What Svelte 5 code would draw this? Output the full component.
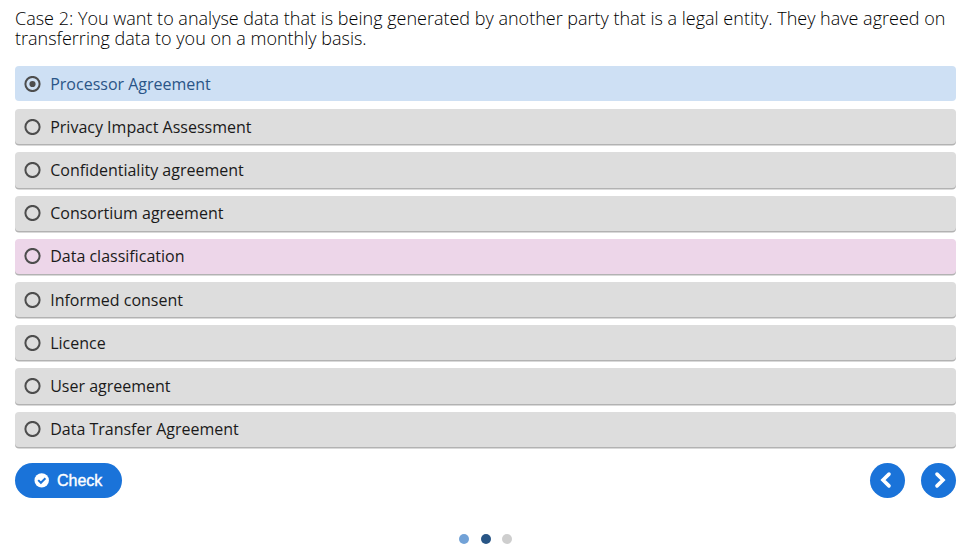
<script>
  const answers = [
    'Processor Agreement',
    'Privacy Impact Assessment',
    'Confidentiality agreement',
    'Consortium agreement',
    'Data classification',
    'Informed consent',
    'Licence',
    'User agreement',
    'Data Transfer Agreement'
  ];
  let selected = $state(0);
</script>

<main>
  <p class="question">
    Case 2: You want to analyse data that is being generated by another party that is a legal entity. They have agreed on transferring data to you on a monthly basis.
  </p>
  <div class="answers" role="radiogroup">
    {#each answers as answer, i}
      <button
        class="answer"
        class:selected={selected === i}
        class:focused={i === 4}
        role="radio"
        aria-checked={selected === i}
        onclick={() => (selected = i)}
      >
        <svg width="17" height="16" viewBox="0 0 17 16">
          <circle cx="8.5" cy="8" r="7.1" fill="none" stroke="#4d4d4d" stroke-width="2" />
          {#if selected === i}<circle cx="8.5" cy="8" r="3.1" fill="#4d4d4d" />{/if}
        </svg>
        <span>{answer}</span>
      </button>
    {/each}
  </div>
  <div class="actions">
    <button class="check">
      <svg width="15" height="15" viewBox="0 0 15 15">
        <circle cx="7.7" cy="7.4" r="7.2" fill="#fff" />
        <path d="M4.2 7.1L6.9 9.8L11.4 5.3" fill="none" stroke="#1a73d9" stroke-width="2" />
      </svg>
      <span>Check</span>
    </button>
    <div class="nav">
      <button aria-label="Previous">
        <svg width="35" height="35" viewBox="0 0 35 35"><path d="M19 11.1L13 17L19 22.9" /></svg>
      </button>
      <button aria-label="Next">
        <svg width="35" height="35" viewBox="0 0 35 35"><path d="M16 11.1L22 17L16 22.9" /></svg>
      </button>
    </div>
  </div>
  <div class="dots"><i class="answered"></i><i class="current"></i><i></i></div>
</main>

<style>
  :global(body) { background: #fff; }
  main {
    box-sizing: border-box;
    height: 557px;
    padding: 9px 18px 0 15px;
    font-family: 'Open Sans', sans-serif;
    overflow: hidden;
  }
  button { border: 0; margin: 0; padding: 0; cursor: pointer; font: inherit; }
  svg { display: block; flex: none; }
  .question {
    height: 57px;
    margin: 0;
    font-size: 18px;
    font-weight: 300;
    line-height: 19.8px;
    color: #000;
  }
  .answers { display: flex; flex-direction: column; gap: 8px; }
  .answer {
    display: flex;
    align-items: center;
    gap: 9.2px;
    height: 35.2px;
    padding: 0 0 0 9px;
    border-radius: 4px;
    background: #ddd;
    box-shadow: 0 1.6px 0 rgba(0, 0, 0, 0.3);
    color: #1a1a1a;
    font-size: 16px;
    line-height: 20px;
    text-align: left;
  }
  .answer.focused { background: #edd6e9; }
  .answer.selected { background: #cee0f4; color: #2a5587; box-shadow: none; }
  .actions {
    display: flex;
    justify-content: space-between;
    margin-top: 16px;
    height: 35px;
  }
  .check {
    display: flex;
    align-items: center;
    gap: 8px;
    width: 107px;
    padding-left: 19px;
    border-radius: 18px;
    background: #1a73d9;
    color: #fff;
    font: 400 16px 'Liberation Sans', Arial, sans-serif;
    -webkit-text-stroke: 0.4px #fff;
  }
  .check span { padding-top: 1px; }
  .nav { display: flex; gap: 16px; }
  .nav button { width: 35px; height: 35px; border-radius: 50%; background: #1a73d9; }
  .nav path { fill: none; stroke: #fff; stroke-width: 3.6; stroke-linecap: round; }
  .dots { display: flex; justify-content: center; gap: 11.5px; margin-top: 36px; }
  .dots i { width: 10px; height: 10px; border-radius: 50%; background: #cecece; }
  .dots .answered { background: #72a2d7; }
  .dots .current { background: #285585; }
</style>
